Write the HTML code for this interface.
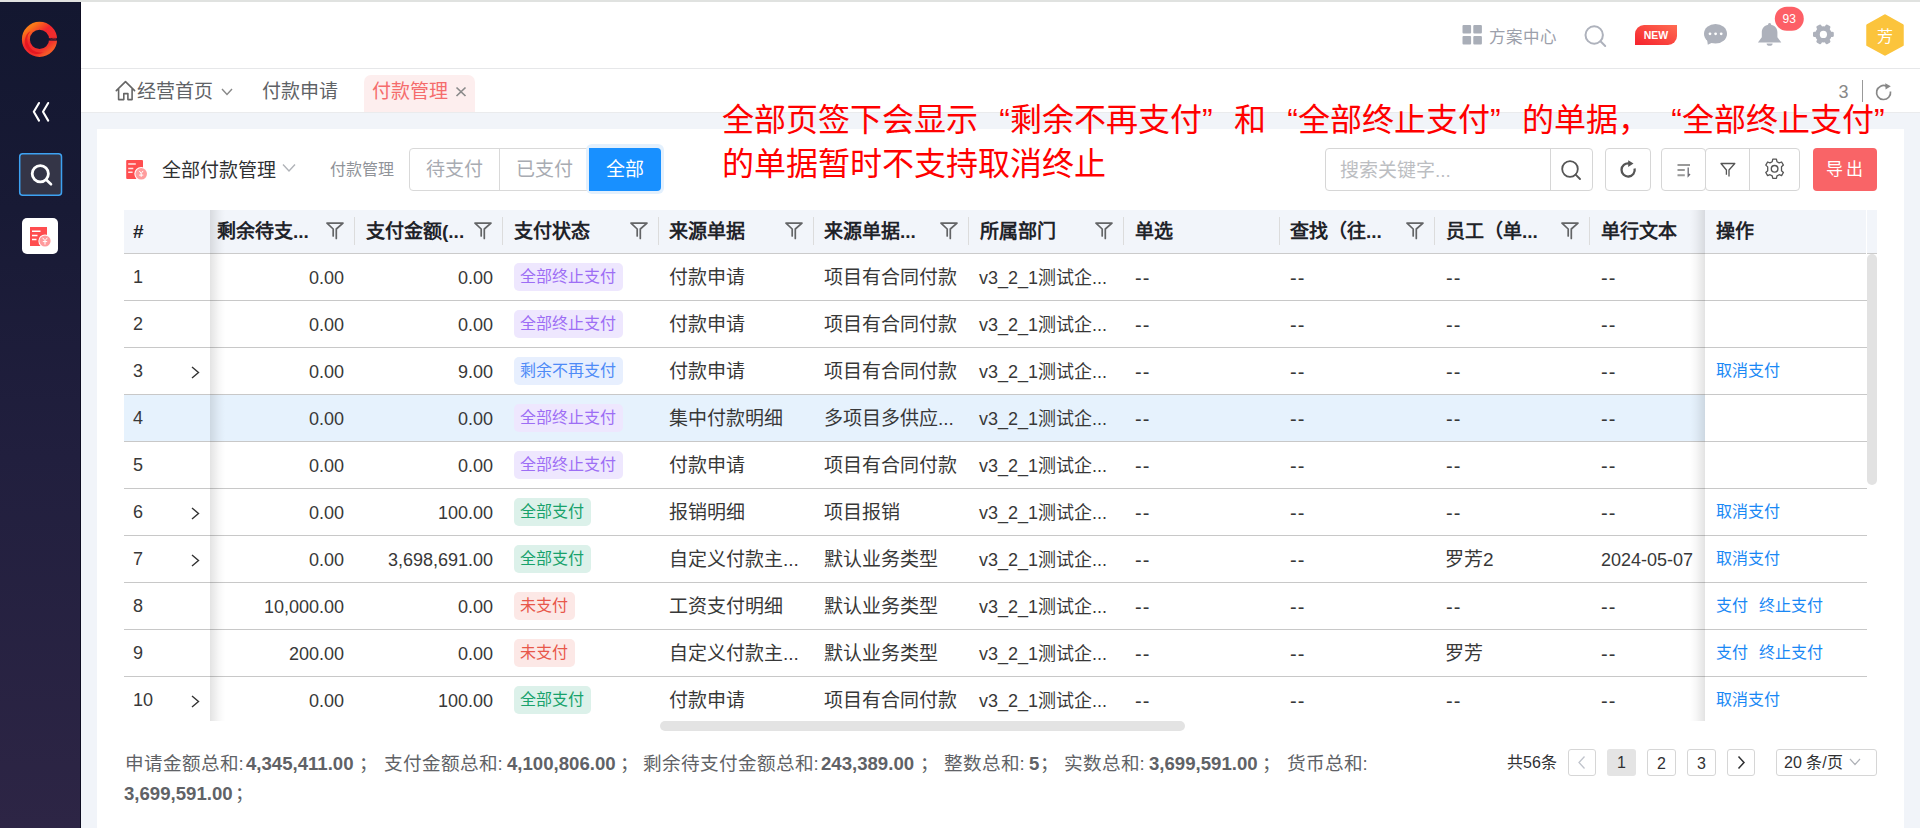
<!DOCTYPE html>
<html lang="zh-CN">
<head>
<meta charset="utf-8">
<style>
*{box-sizing:border-box;margin:0;padding:0}
html,body{width:1920px;height:828px;overflow:hidden}
body{position:relative;background:#f1f4f9;font-family:"Liberation Sans",sans-serif;color:#303133}
.a{position:absolute;white-space:nowrap}
#topstrip{left:0;top:0;width:1920px;height:2px;background:#e0e2e0}
#side{left:0;top:2px;width:81px;height:826px;background:linear-gradient(to bottom,#131730 0%,#181a35 25%,#211f3e 55%,#2d2545 100%);box-shadow:inset -1px 0 #0e0d22}
#header{left:81px;top:2px;width:1839px;height:67px;background:#fff;border-bottom:1px solid #e6e7e9}
#tabs{left:81px;top:69px;width:1839px;height:44px;background:#fff;border-bottom:1px solid #eaebed}
#card{left:97px;top:129px;width:1807px;height:699px;background:#fff}
.th{font-weight:bold;font-size:19px;color:#1f2329;line-height:43px;top:210px}
.sep{top:217px;width:1px;height:28px;background:#dcdcdc}
.td{font-size:19px;color:#383838;line-height:46px;padding-top:1px}
.num{font-size:18px;text-align:right}
.tag{height:27.5px;line-height:27.5px;font-size:16px;padding:0 6.5px 0 6px;border-radius:5px}
.t-p{background:#eee7fe;color:#9d6ef5}
.t-b{background:#e7effe;color:#4f8bf7}
.t-g{background:#dcf1ea;color:#18a26c}
.t-r{background:#fce8e6;color:#e8574a}
.lnk{font-size:16px;color:#1a88f5;line-height:46px}
.rowb{left:124px;width:1743px;height:1px;background:#c8c8c8}
</style>
</head>
<body>
<div id="topstrip" class="a"></div>
<div id="side" class="a"></div>
<div id="header" class="a"></div>
<div id="tabs" class="a"></div>
<div id="card" class="a"></div>
<svg class="a" style="left:0;top:0" width="81" height="270" viewBox="0 0 81 270">
<defs><linearGradient id="lg" x1="0.15" y1="0.05" x2="0.85" y2="0.95"><stop offset="0" stop-color="#fa7a18"/><stop offset="0.38" stop-color="#f2262e"/><stop offset="0.8" stop-color="#f0302c"/><stop offset="1" stop-color="#f55a28"/></linearGradient>
<radialGradient id="lg2" cx="0.5" cy="0.5" r="0.5"><stop offset="0.6" stop-color="#d8101c" stop-opacity="0.9"/><stop offset="1" stop-color="#ff3a20" stop-opacity="0"/></radialGradient></defs>
<circle cx="39.5" cy="39.4" r="13.6" fill="none" stroke="url(#lg)" stroke-width="8"/>
<path d="M30.5 31 A13 13 0 0 0 44 52 A10.5 10.5 0 0 1 30.5 31 Z" fill="#e3141f" opacity="0.85"/>
<rect x="49" y="38.2" width="9" height="2.4" fill="#131730"/>
<text x="53" y="40.4" text-anchor="middle" font-family="Liberation Sans" font-size="2.6" fill="#d0202a">CRM</text>
<path d="M39 103 L33.8 111.8 L39 120.6 M48.2 103 L43 111.8 L48.2 120.6" fill="none" stroke="#fff" stroke-width="2.1" stroke-linecap="round" stroke-linejoin="round"/>
<rect x="19.7" y="153.7" width="41.8" height="41.6" rx="3" fill="#343547" stroke="#3da2f2" stroke-width="1.5"/>
<circle cx="40.3" cy="173.7" r="8.1" fill="none" stroke="#fff" stroke-width="2.8"/>
<path d="M46.3 179.7 L51 184.3" stroke="#fff" stroke-width="2.6" stroke-linecap="round"/>
<rect x="22" y="218" width="36" height="36" rx="5" fill="#fff"/>
<rect x="30" y="227" width="17" height="19" fill="#ff4d4f"/>
<path d="M32 231.2 H40.5 M32 235.5 H37.5 M32 239.5 H36.5" stroke="#fff" stroke-width="1.5"/>
<circle cx="45" cy="241" r="6.6" fill="#fff"/>
<circle cx="45" cy="241" r="5.6" fill="#ff9a9c"/>
<path d="M42.6 237.8 L45 240.6 L47.4 237.8 M45 240.6 V244.6 M42.8 241.6 H47.2" stroke="#fff" stroke-width="1" fill="none"/>
</svg>
<svg class="a" style="left:1455px;top:4px" width="465" height="60" viewBox="1455 4 465 60">
<rect x="1462.5" y="25" width="8.6" height="8.6" rx="1" fill="#a9aeb8"/>
<rect x="1473.3" y="25" width="8.6" height="8.6" rx="1" fill="#a9aeb8"/>
<rect x="1462.5" y="35.9" width="8.6" height="8.6" rx="1" fill="#a9aeb8"/>
<rect x="1473.3" y="35.9" width="8.6" height="8.6" rx="1" fill="#a9aeb8"/>
<circle cx="1594.2" cy="35" r="8.7" fill="none" stroke="#aeb2bc" stroke-width="2"/>
<path d="M1600.5 41.3 L1605.2 46" stroke="#aeb2bc" stroke-width="2" stroke-linecap="round"/>
<defs><linearGradient id="ng" x1="0" y1="1" x2="1" y2="0"><stop offset="0" stop-color="#f5222d"/><stop offset="1" stop-color="#ff6b52"/></linearGradient></defs>
<path d="M1644 25 H1677 V36 A9 9 0 0 1 1668 45 H1635 V34 A9 9 0 0 1 1644 25 Z" fill="url(#ng)"/>
<text x="1656" y="39.3" text-anchor="middle" font-family="Liberation Sans" font-weight="bold" font-size="10.5" fill="#fff">NEW</text>
<ellipse cx="1715.5" cy="33.8" rx="11.5" ry="9.8" fill="#adb1bb"/>
<path d="M1707 39 L1707.8 44.8 L1713.5 42" fill="#adb1bb"/>
<circle cx="1710" cy="33.8" r="1.4" fill="#fff"/><circle cx="1715.6" cy="33.8" r="1.4" fill="#fff"/><circle cx="1721.2" cy="33.8" r="1.4" fill="#fff"/>
<path d="M1769.6 23 C1768.5 23 1768.1 23.7 1768.1 24.8 C1764 25.6 1761.8 28.5 1761.8 32.5 V37.2 L1757.9 42.6 H1781.3 L1777.4 37.2 V32.5 C1777.4 28.5 1775.2 25.6 1771.1 24.8 C1771.1 23.7 1770.7 23 1769.6 23 Z" fill="#adb1bb"/>
<path d="M1766.6 43.4 H1772.6 A3 2.3 0 0 1 1766.6 43.4 Z" fill="#adb1bb"/>
<rect x="1774.8" y="6.7" width="29" height="24.1" rx="12" fill="#fd5f66"/>
<text x="1789.3" y="22.6" text-anchor="middle" font-family="Liberation Sans" font-size="12" fill="#fff">93</text>
<g transform="translate(1823.4 34.4)" fill="#adb1bb">
<circle r="8.2"/>
<rect x="-2.7" y="-10.4" width="5.4" height="20.8" rx="1.4" transform="rotate(90)"/>
<rect x="-2.7" y="-10.4" width="5.4" height="20.8" rx="1.4" transform="rotate(30)"/>
<rect x="-2.7" y="-10.4" width="5.4" height="20.8" rx="1.4" transform="rotate(150)"/>
<circle r="3.6" fill="#fff"/>
</g>
<path d="M1885 15.5 L1902.5 25.3 V45 L1885 54.5 L1867.5 45 V25.3 Z" fill="#fbc43c" stroke="#fbc43c" stroke-width="2.5" stroke-linejoin="round"/>
</svg>
<div class="a" style="left:1489px;top:25px;font-size:16.5px;line-height:24px;color:#9ca0ab">方案中心</div>
<div class="a" style="left:1877px;top:23px;font-size:16px;line-height:28px;color:#fff">芳</div>
<div class="a" style="left:364px;top:75px;width:111px;height:37px;background:#fdeeee;border-radius:7px 7px 0 0"></div>
<svg class="a" style="left:112px;top:78px" width="26" height="26" viewBox="0 0 26 26"><path d="M4.3 12.6 L13.5 3.6 L22.6 12.6 M6.6 10.6 V21.6 H11.8 V15.6 H15.9 V21.6 H20.1 V10.6" fill="none" stroke="#666" stroke-width="1.6" stroke-linejoin="round" stroke-linecap="round"/></svg>
<div class="a" style="left:137px;top:79px;font-size:19px;line-height:26px;color:#606266">经营首页</div>
<svg class="a" style="left:220px;top:87px" width="14" height="10" viewBox="0 0 14 10"><path d="M2 2 L7 7.5 L12 2" fill="none" stroke="#888" stroke-width="1.4"/></svg>
<div class="a" style="left:262px;top:79px;font-size:19px;line-height:26px;color:#606266">付款申请</div>
<div class="a" style="left:372px;top:79px;font-size:19px;line-height:26px;color:#f56c6c">付款管理</div>
<svg class="a" style="left:454px;top:85px" width="14" height="13" viewBox="0 0 14 13"><path d="M2.5 2.5 L11.5 11 M11.5 2.5 L2.5 11" stroke="#8a8a8a" stroke-width="1.7"/></svg>
<div class="a" style="left:1838.5px;top:80px;font-size:18px;line-height:24px;color:#888">3</div>
<div class="a" style="left:1862px;top:80px;width:1px;height:22px;background:#999"></div>
<svg class="a" style="left:1873px;top:82px" width="22" height="22" viewBox="0 0 22 22"><path d="M17.5 9.5 A7 7 0 1 1 13.6 4.2" fill="none" stroke="#888" stroke-width="1.7"/><path d="M12.2 1.2 L17.8 4.3 L12.6 7.6 Z" fill="#888"/></svg>
<svg class="a" style="left:120px;top:155px" width="32" height="30" viewBox="120 155 32 30">
<rect x="126.2" y="160" width="16.8" height="19" rx="1" fill="#ff4d4f"/>
<path d="M128.2 164 H135.8 M128.2 168.4 H133.3 M128.2 172.3 H132.6" stroke="#fff" stroke-opacity="0.85" stroke-width="1.5"/>
<circle cx="141.2" cy="173.8" r="6.9" fill="#fff"/>
<circle cx="141.2" cy="173.8" r="5.8" fill="#ff9c9d"/>
<path d="M139.3 170.9 L141.2 173.5 L143.1 170.9 M141.2 173.5 V176.9 M139.1 175.1 H143.3" stroke="#fff" stroke-width="1" fill="none"/>
</svg>
<div class="a" style="left:162px;top:156px;font-size:19px;line-height:30px;color:#303133">全部付款管理</div>
<svg class="a" style="left:281px;top:162px" width="16" height="12" viewBox="0 0 16 12"><path d="M2 2.5 L8 9 L14 2.5" fill="none" stroke="#b0b3b8" stroke-width="1.4"/></svg>
<div class="a" style="left:330px;top:158px;font-size:16px;line-height:24px;color:#909399">付款管理</div>
<div class="a" style="left:409px;top:148px;width:181px;height:43px;border:1px solid #d9d9d9;border-radius:4px 0 0 4px"></div>
<div class="a" style="left:499px;top:148px;width:1px;height:43px;background:#d9d9d9"></div>
<div class="a" style="left:426px;top:155px;font-size:19px;line-height:30px;color:#a8abb2">待支付</div>
<div class="a" style="left:516px;top:155px;font-size:19px;line-height:30px;color:#a8abb2">已支付</div>
<div class="a" style="left:586px;top:144px;width:78px;height:50px;border-radius:6px;background:#e3f0fd"></div>
<div class="a" style="left:589px;top:148px;width:72px;height:43px;border-radius:0 4px 4px 0;background:#1890ff"></div>
<div class="a" style="left:606px;top:155px;font-size:19px;line-height:30px;color:#fff">全部</div>
<div class="a" style="left:1325px;top:148px;width:268px;height:43px;border:1px solid #d6d6d6;border-radius:4px"></div>
<div class="a" style="left:1550px;top:148px;width:1px;height:43px;background:#d6d6d6"></div>
<div class="a" style="left:1340px;top:157px;font-size:19px;line-height:28px;color:#bcbec2">搜索关键字...</div>
<div class="a" style="left:1605px;top:148px;width:46px;height:43px;border:1px solid #d6d6d6;border-radius:4px"></div>
<div class="a" style="left:1661px;top:148px;width:45px;height:43px;border:1px solid #d6d6d6;border-radius:4px"></div>
<div class="a" style="left:1705px;top:148px;width:95px;height:43px;border:1px solid #d6d6d6;border-radius:4px"></div>
<div class="a" style="left:1749px;top:148px;width:1px;height:43px;background:#d6d6d6"></div>
<svg class="a" style="left:1555px;top:148px" width="250" height="42" viewBox="1555 148 250 42">
<circle cx="1570" cy="169" r="7.8" fill="none" stroke="#555" stroke-width="1.8"/>
<path d="M1575.6 174.6 L1580 179" stroke="#555" stroke-width="1.9" stroke-linecap="round"/>
<path d="M1634.6 168.6 A6.6 6.6 0 1 1 1629 163.4" fill="none" stroke="#555" stroke-width="2.3"/>
<path d="M1628.2 160.2 L1633.5 163.6 L1628.2 167 Z" fill="#555"/>
<path d="M1677.5 165 H1690 M1677.5 170 H1684.8 M1677.5 175.2 H1684.8" stroke="#999" stroke-width="1.9"/>
<path d="M1688.2 167.5 V176 L1690 174" stroke="#6a6a72" stroke-width="1.3" fill="none"/>
<path d="M1726.4 174.8 V170 L1721 163.5 H1734.8 L1729 170 V176.6" fill="none" stroke="#555" stroke-width="1.3" stroke-linejoin="round"/>
</svg>
<svg class="a" style="left:1761px;top:156px" width="26" height="26" viewBox="-13 -13 26 26">
<path d="M-1.8 -9.6 H1.8 L2.4 -7.1 L4.6 -5.9 L7 -6.8 L8.8 -3.7 L6.9 -2 V1.9 L8.8 3.7 L7 6.8 L4.6 5.9 L2.4 7.1 L1.8 9.6 H-1.8 L-2.4 7.1 L-4.6 5.9 L-7 6.8 L-8.8 3.7 L-6.9 2 V-1.9 L-8.8 -3.7 L-7 -6.8 L-4.6 -5.9 L-2.4 -7.1 Z" fill="none" stroke="#555" stroke-width="1.3" stroke-linejoin="round" transform="translate(0.6 -0.2)"/>
<circle cx="0.6" cy="-0.2" r="3.3" fill="none" stroke="#555" stroke-width="1.4"/>
</svg>
<div class="a" style="left:1813px;top:148px;width:64px;height:43px;border-radius:4px;background:#f96467"></div>
<div class="a" style="left:1826px;top:156px;font-size:17px;line-height:27px;color:#fff;letter-spacing:3px">导出</div>
<div class="a" style="left:124.5px;top:749px;font-size:18.6px;line-height:30px;color:#606266">申请金额总和:</div>
<div class="a" style="left:246px;top:749px;font-size:18.6px;line-height:30px;color:#606266;font-weight:bold">4,345,411.00</div>
<div class="a" style="left:359px;top:749px;font-size:18.6px;line-height:30px;color:#606266">；</div>
<div class="a" style="left:383.5px;top:749px;font-size:18.6px;line-height:30px;color:#606266">支付金额总和:</div>
<div class="a" style="left:507px;top:749px;font-size:18.6px;line-height:30px;color:#606266;font-weight:bold">4,100,806.00</div>
<div class="a" style="left:620px;top:749px;font-size:18.6px;line-height:30px;color:#606266">；</div>
<div class="a" style="left:642.5px;top:749px;font-size:18.6px;line-height:30px;color:#606266">剩余待支付金额总和:</div>
<div class="a" style="left:821px;top:749px;font-size:18.6px;line-height:30px;color:#606266;font-weight:bold">243,389.00</div>
<div class="a" style="left:920px;top:749px;font-size:18.6px;line-height:30px;color:#606266">；</div>
<div class="a" style="left:943.5px;top:749px;font-size:18.6px;line-height:30px;color:#606266">整数总和:</div>
<div class="a" style="left:1029px;top:749px;font-size:18.6px;line-height:30px;color:#606266;font-weight:bold">5</div>
<div class="a" style="left:1040px;top:749px;font-size:18.6px;line-height:30px;color:#606266">；</div>
<div class="a" style="left:1063.5px;top:749px;font-size:18.6px;line-height:30px;color:#606266">实数总和:</div>
<div class="a" style="left:1149px;top:749px;font-size:18.6px;line-height:30px;color:#606266;font-weight:bold">3,699,591.00</div>
<div class="a" style="left:1262px;top:749px;font-size:18.6px;line-height:30px;color:#606266">；</div>
<div class="a" style="left:1286.5px;top:749px;font-size:18.6px;line-height:30px;color:#606266">货币总和:</div>
<div class="a" style="left:124px;top:779px;font-size:18.6px;line-height:30px;color:#606266;font-weight:bold">3,699,591.00</div>
<div class="a" style="left:235px;top:779px;font-size:18.6px;line-height:30px;color:#606266">；</div>
<div class="a" style="left:1507px;top:751px;font-size:16px;line-height:24px;color:#303133">共56条</div>
<div class="a" style="left:1568px;top:749px;width:28px;height:27px;border:1px solid #d6d6d6;border-radius:3px"></div>
<svg class="a" style="left:1568px;top:749px" width="28" height="27" viewBox="0 0 28 27"><path d="M16.5 7.5 L11 13.5 L16.5 19.5" fill="none" stroke="#c0c4cc" stroke-width="1.3"/></svg>
<div class="a" style="left:1607px;top:749px;width:29px;height:27px;border-radius:3px;background:#e4e4e4;font-size:16px;line-height:28px;text-align:center;color:#303133">1</div>
<div class="a" style="left:1647px;top:749px;width:29px;height:27px;border:1px solid #d6d6d6;border-radius:3px;font-size:16px;line-height:27px;text-align:center;color:#303133">2</div>
<div class="a" style="left:1687px;top:749px;width:29px;height:27px;border:1px solid #d6d6d6;border-radius:3px;font-size:16px;line-height:27px;text-align:center;color:#303133">3</div>
<div class="a" style="left:1727px;top:749px;width:28px;height:27px;border:1px solid #d6d6d6;border-radius:3px"></div>
<svg class="a" style="left:1727px;top:749px" width="28" height="27" viewBox="0 0 28 27"><path d="M11.5 7.5 L17 13.5 L11.5 19.5" fill="none" stroke="#303133" stroke-width="1.5"/></svg>
<div class="a" style="left:1776px;top:749px;width:101px;height:27px;border:1px solid #d6d6d6;border-radius:3px"></div>
<div class="a" style="left:1784px;top:751px;font-size:16px;line-height:24px;color:#303133">20 条/页</div>
<svg class="a" style="left:1848px;top:756px" width="14" height="12" viewBox="0 0 14 12"><path d="M2 3 L7 8.5 L12 3" fill="none" stroke="#b0b3b8" stroke-width="1.2"/></svg>
<div class="a" style="left:124px;top:210px;width:1753px;height:43px;background:#f2f5fa"></div>
<div class="a" style="left:124px;top:253px;width:1753px;height:1px;background:#cbcbcb"></div>
<div class="a" style="left:0;top:0;width:1920px;height:721px;overflow:hidden">
<div class="a rowb" style="top:300px"></div>
<div class="a td num" style="right:1576px;top:254px">0.00</div>
<div class="a td num" style="right:1427px;top:254px">0.00</div>
<div class="a tag t-p" style="left:514px;top:263px">全部终止支付</div>
<div class="a td" style="left:669px;top:254px">付款申请</div>
<div class="a td" style="left:824px;top:254px">项目有合同付款</div>
<div class="a td" style="left:979px;top:254px;font-size:18px">v3_2_1测试企...</div>
<div class="a td" style="left:1135px;top:254px;font-size:20px;letter-spacing:1px">--</div>
<div class="a td" style="left:1290px;top:254px;font-size:20px;letter-spacing:1px">--</div>
<div class="a td" style="left:1446px;top:254px;font-size:20px;letter-spacing:1px">--</div>
<div class="a td" style="left:1601px;top:254px;font-size:20px;letter-spacing:1px">--</div>
<div class="a rowb" style="top:347px"></div>
<div class="a td num" style="right:1576px;top:301px">0.00</div>
<div class="a td num" style="right:1427px;top:301px">0.00</div>
<div class="a tag t-p" style="left:514px;top:310px">全部终止支付</div>
<div class="a td" style="left:669px;top:301px">付款申请</div>
<div class="a td" style="left:824px;top:301px">项目有合同付款</div>
<div class="a td" style="left:979px;top:301px;font-size:18px">v3_2_1测试企...</div>
<div class="a td" style="left:1135px;top:301px;font-size:20px;letter-spacing:1px">--</div>
<div class="a td" style="left:1290px;top:301px;font-size:20px;letter-spacing:1px">--</div>
<div class="a td" style="left:1446px;top:301px;font-size:20px;letter-spacing:1px">--</div>
<div class="a td" style="left:1601px;top:301px;font-size:20px;letter-spacing:1px">--</div>
<div class="a rowb" style="top:394px"></div>
<div class="a td num" style="right:1576px;top:348px">0.00</div>
<div class="a td num" style="right:1427px;top:348px">9.00</div>
<div class="a tag t-b" style="left:514px;top:357px">剩余不再支付</div>
<div class="a td" style="left:669px;top:348px">付款申请</div>
<div class="a td" style="left:824px;top:348px">项目有合同付款</div>
<div class="a td" style="left:979px;top:348px;font-size:18px">v3_2_1测试企...</div>
<div class="a td" style="left:1135px;top:348px;font-size:20px;letter-spacing:1px">--</div>
<div class="a td" style="left:1290px;top:348px;font-size:20px;letter-spacing:1px">--</div>
<div class="a td" style="left:1446px;top:348px;font-size:20px;letter-spacing:1px">--</div>
<div class="a td" style="left:1601px;top:348px;font-size:20px;letter-spacing:1px">--</div>
<div class="a" style="left:124px;top:395px;width:1581px;height:46px;background:#e6f2fd"></div>
<div class="a rowb" style="top:441px"></div>
<div class="a td num" style="right:1576px;top:395px">0.00</div>
<div class="a td num" style="right:1427px;top:395px">0.00</div>
<div class="a tag t-p" style="left:514px;top:404px">全部终止支付</div>
<div class="a td" style="left:669px;top:395px">集中付款明细</div>
<div class="a td" style="left:824px;top:395px">多项目多供应...</div>
<div class="a td" style="left:979px;top:395px;font-size:18px">v3_2_1测试企...</div>
<div class="a td" style="left:1135px;top:395px;font-size:20px;letter-spacing:1px">--</div>
<div class="a td" style="left:1290px;top:395px;font-size:20px;letter-spacing:1px">--</div>
<div class="a td" style="left:1446px;top:395px;font-size:20px;letter-spacing:1px">--</div>
<div class="a td" style="left:1601px;top:395px;font-size:20px;letter-spacing:1px">--</div>
<div class="a rowb" style="top:488px"></div>
<div class="a td num" style="right:1576px;top:442px">0.00</div>
<div class="a td num" style="right:1427px;top:442px">0.00</div>
<div class="a tag t-p" style="left:514px;top:451px">全部终止支付</div>
<div class="a td" style="left:669px;top:442px">付款申请</div>
<div class="a td" style="left:824px;top:442px">项目有合同付款</div>
<div class="a td" style="left:979px;top:442px;font-size:18px">v3_2_1测试企...</div>
<div class="a td" style="left:1135px;top:442px;font-size:20px;letter-spacing:1px">--</div>
<div class="a td" style="left:1290px;top:442px;font-size:20px;letter-spacing:1px">--</div>
<div class="a td" style="left:1446px;top:442px;font-size:20px;letter-spacing:1px">--</div>
<div class="a td" style="left:1601px;top:442px;font-size:20px;letter-spacing:1px">--</div>
<div class="a rowb" style="top:535px"></div>
<div class="a td num" style="right:1576px;top:489px">0.00</div>
<div class="a td num" style="right:1427px;top:489px">100.00</div>
<div class="a tag t-g" style="left:514px;top:498px">全部支付</div>
<div class="a td" style="left:669px;top:489px">报销明细</div>
<div class="a td" style="left:824px;top:489px">项目报销</div>
<div class="a td" style="left:979px;top:489px;font-size:18px">v3_2_1测试企...</div>
<div class="a td" style="left:1135px;top:489px;font-size:20px;letter-spacing:1px">--</div>
<div class="a td" style="left:1290px;top:489px;font-size:20px;letter-spacing:1px">--</div>
<div class="a td" style="left:1446px;top:489px;font-size:20px;letter-spacing:1px">--</div>
<div class="a td" style="left:1601px;top:489px;font-size:20px;letter-spacing:1px">--</div>
<div class="a rowb" style="top:582px"></div>
<div class="a td num" style="right:1576px;top:536px">0.00</div>
<div class="a td num" style="right:1427px;top:536px">3,698,691.00</div>
<div class="a tag t-g" style="left:514px;top:545px">全部支付</div>
<div class="a td" style="left:669px;top:536px">自定义付款主...</div>
<div class="a td" style="left:824px;top:536px">默认业务类型</div>
<div class="a td" style="left:979px;top:536px;font-size:18px">v3_2_1测试企...</div>
<div class="a td" style="left:1135px;top:536px;font-size:20px;letter-spacing:1px">--</div>
<div class="a td" style="left:1290px;top:536px;font-size:20px;letter-spacing:1px">--</div>
<div class="a td" style="left:1445px;top:536px">罗芳2</div>
<div class="a td" style="left:1601px;top:536px;font-size:18px">2024-05-07</div>
<div class="a rowb" style="top:629px"></div>
<div class="a td num" style="right:1576px;top:583px">10,000.00</div>
<div class="a td num" style="right:1427px;top:583px">0.00</div>
<div class="a tag t-r" style="left:514px;top:592px">未支付</div>
<div class="a td" style="left:669px;top:583px">工资支付明细</div>
<div class="a td" style="left:824px;top:583px">默认业务类型</div>
<div class="a td" style="left:979px;top:583px;font-size:18px">v3_2_1测试企...</div>
<div class="a td" style="left:1135px;top:583px;font-size:20px;letter-spacing:1px">--</div>
<div class="a td" style="left:1290px;top:583px;font-size:20px;letter-spacing:1px">--</div>
<div class="a td" style="left:1446px;top:583px;font-size:20px;letter-spacing:1px">--</div>
<div class="a td" style="left:1601px;top:583px;font-size:20px;letter-spacing:1px">--</div>
<div class="a rowb" style="top:676px"></div>
<div class="a td num" style="right:1576px;top:630px">200.00</div>
<div class="a td num" style="right:1427px;top:630px">0.00</div>
<div class="a tag t-r" style="left:514px;top:639px">未支付</div>
<div class="a td" style="left:669px;top:630px">自定义付款主...</div>
<div class="a td" style="left:824px;top:630px">默认业务类型</div>
<div class="a td" style="left:979px;top:630px;font-size:18px">v3_2_1测试企...</div>
<div class="a td" style="left:1135px;top:630px;font-size:20px;letter-spacing:1px">--</div>
<div class="a td" style="left:1290px;top:630px;font-size:20px;letter-spacing:1px">--</div>
<div class="a td" style="left:1445px;top:630px">罗芳</div>
<div class="a td" style="left:1601px;top:630px;font-size:20px;letter-spacing:1px">--</div>
<div class="a td num" style="right:1576px;top:677px">0.00</div>
<div class="a td num" style="right:1427px;top:677px">100.00</div>
<div class="a tag t-g" style="left:514px;top:686px">全部支付</div>
<div class="a td" style="left:669px;top:677px">付款申请</div>
<div class="a td" style="left:824px;top:677px">项目有合同付款</div>
<div class="a td" style="left:979px;top:677px;font-size:18px">v3_2_1测试企...</div>
<div class="a td" style="left:1135px;top:677px;font-size:20px;letter-spacing:1px">--</div>
<div class="a td" style="left:1290px;top:677px;font-size:20px;letter-spacing:1px">--</div>
<div class="a td" style="left:1446px;top:677px;font-size:20px;letter-spacing:1px">--</div>
<div class="a td" style="left:1601px;top:677px;font-size:20px;letter-spacing:1px">--</div>
<div class="a" style="left:124px;top:254px;width:86px;height:467px;background:#fff"></div>
<div class="a rowb" style="top:300px;width:86px"></div>
<div class="a td" style="left:133px;top:253px;font-size:18px">1</div>
<div class="a rowb" style="top:347px;width:86px"></div>
<div class="a td" style="left:133px;top:300px;font-size:18px">2</div>
<div class="a rowb" style="top:394px;width:86px"></div>
<div class="a td" style="left:133px;top:347px;font-size:18px">3</div>
<svg class="a" style="left:190px;top:365.5px" width="11" height="13" viewBox="0 0 11 13"><path d="M2 1 L8.5 6.5 L2 12" fill="none" stroke="#333" stroke-width="1.4"/></svg>
<div class="a" style="left:124px;top:395px;width:86px;height:46px;background:#e6f2fd"></div>
<div class="a rowb" style="top:441px;width:86px"></div>
<div class="a td" style="left:133px;top:394px;font-size:18px">4</div>
<div class="a rowb" style="top:488px;width:86px"></div>
<div class="a td" style="left:133px;top:441px;font-size:18px">5</div>
<div class="a rowb" style="top:535px;width:86px"></div>
<div class="a td" style="left:133px;top:488px;font-size:18px">6</div>
<svg class="a" style="left:190px;top:506.5px" width="11" height="13" viewBox="0 0 11 13"><path d="M2 1 L8.5 6.5 L2 12" fill="none" stroke="#333" stroke-width="1.4"/></svg>
<div class="a rowb" style="top:582px;width:86px"></div>
<div class="a td" style="left:133px;top:535px;font-size:18px">7</div>
<svg class="a" style="left:190px;top:553.5px" width="11" height="13" viewBox="0 0 11 13"><path d="M2 1 L8.5 6.5 L2 12" fill="none" stroke="#333" stroke-width="1.4"/></svg>
<div class="a rowb" style="top:629px;width:86px"></div>
<div class="a td" style="left:133px;top:582px;font-size:18px">8</div>
<div class="a rowb" style="top:676px;width:86px"></div>
<div class="a td" style="left:133px;top:629px;font-size:18px">9</div>
<div class="a td" style="left:133px;top:676px;font-size:18px">10</div>
<svg class="a" style="left:190px;top:694.5px" width="11" height="13" viewBox="0 0 11 13"><path d="M2 1 L8.5 6.5 L2 12" fill="none" stroke="#333" stroke-width="1.4"/></svg>
<div class="a" style="left:210px;top:210px;width:15px;height:511px;background:linear-gradient(to right,rgba(0,0,0,.11),rgba(0,0,0,.03) 60%,rgba(0,0,0,0))"></div>
<div class="a" style="left:1705px;top:254px;width:162px;height:467px;background:#fff"></div>
<div class="a rowb" style="left:1705px;top:300px;width:162px"></div>
<div class="a rowb" style="left:1705px;top:347px;width:162px"></div>
<div class="a rowb" style="left:1705px;top:394px;width:162px"></div>
<div class="a lnk" style="left:1716px;top:348px">取消支付</div>
<div class="a rowb" style="left:1705px;top:441px;width:162px"></div>
<div class="a rowb" style="left:1705px;top:488px;width:162px"></div>
<div class="a rowb" style="left:1705px;top:535px;width:162px"></div>
<div class="a lnk" style="left:1716px;top:489px">取消支付</div>
<div class="a rowb" style="left:1705px;top:582px;width:162px"></div>
<div class="a lnk" style="left:1716px;top:536px">取消支付</div>
<div class="a rowb" style="left:1705px;top:629px;width:162px"></div>
<div class="a lnk" style="left:1716px;top:583px">支付</div>
<div class="a lnk" style="left:1759px;top:583px">终止支付</div>
<div class="a rowb" style="left:1705px;top:676px;width:162px"></div>
<div class="a lnk" style="left:1716px;top:630px">支付</div>
<div class="a lnk" style="left:1759px;top:630px">终止支付</div>
<div class="a lnk" style="left:1716px;top:677px">取消支付</div>
<div class="a" style="left:1690px;top:210px;width:15px;height:511px;background:linear-gradient(to left,rgba(0,0,0,.11),rgba(0,0,0,.03) 60%,rgba(0,0,0,0))"></div>
</div>
<div class="a" style="left:124px;top:210px;width:86px;height:43px;background:#f2f5fa"></div>
<div class="a th" style="left:133px">#</div>
<div class="a th" style="left:217px">剩余待支...</div>
<div class="a sep" style="left:354px"></div>
<svg class="a" style="left:326px;top:222px" width="18" height="18" viewBox="0 0 18 18"><path d="M7.2 14 V7 L1 1.2 H17 L10.3 7 V16.5" fill="none" stroke="#636466" stroke-width="1.7" stroke-linejoin="round" stroke-linecap="round"/></svg>
<div class="a th" style="left:366px">支付金额(...</div>
<div class="a sep" style="left:502px"></div>
<svg class="a" style="left:474px;top:222px" width="18" height="18" viewBox="0 0 18 18"><path d="M7.2 14 V7 L1 1.2 H17 L10.3 7 V16.5" fill="none" stroke="#636466" stroke-width="1.7" stroke-linejoin="round" stroke-linecap="round"/></svg>
<div class="a th" style="left:514px">支付状态</div>
<div class="a sep" style="left:658px"></div>
<svg class="a" style="left:630px;top:222px" width="18" height="18" viewBox="0 0 18 18"><path d="M7.2 14 V7 L1 1.2 H17 L10.3 7 V16.5" fill="none" stroke="#636466" stroke-width="1.7" stroke-linejoin="round" stroke-linecap="round"/></svg>
<div class="a th" style="left:669px">来源单据</div>
<div class="a sep" style="left:813px"></div>
<svg class="a" style="left:785px;top:222px" width="18" height="18" viewBox="0 0 18 18"><path d="M7.2 14 V7 L1 1.2 H17 L10.3 7 V16.5" fill="none" stroke="#636466" stroke-width="1.7" stroke-linejoin="round" stroke-linecap="round"/></svg>
<div class="a th" style="left:824px">来源单据...</div>
<div class="a sep" style="left:968px"></div>
<svg class="a" style="left:940px;top:222px" width="18" height="18" viewBox="0 0 18 18"><path d="M7.2 14 V7 L1 1.2 H17 L10.3 7 V16.5" fill="none" stroke="#636466" stroke-width="1.7" stroke-linejoin="round" stroke-linecap="round"/></svg>
<div class="a th" style="left:980px">所属部门</div>
<div class="a sep" style="left:1123px"></div>
<svg class="a" style="left:1095px;top:222px" width="18" height="18" viewBox="0 0 18 18"><path d="M7.2 14 V7 L1 1.2 H17 L10.3 7 V16.5" fill="none" stroke="#636466" stroke-width="1.7" stroke-linejoin="round" stroke-linecap="round"/></svg>
<div class="a th" style="left:1135px">单选</div>
<div class="a sep" style="left:1279px"></div>
<div class="a th" style="left:1290px">查找（往...</div>
<div class="a sep" style="left:1434px"></div>
<svg class="a" style="left:1406px;top:222px" width="18" height="18" viewBox="0 0 18 18"><path d="M7.2 14 V7 L1 1.2 H17 L10.3 7 V16.5" fill="none" stroke="#636466" stroke-width="1.7" stroke-linejoin="round" stroke-linecap="round"/></svg>
<div class="a th" style="left:1446px">员工（单...</div>
<div class="a sep" style="left:1589px"></div>
<svg class="a" style="left:1561px;top:222px" width="18" height="18" viewBox="0 0 18 18"><path d="M7.2 14 V7 L1 1.2 H17 L10.3 7 V16.5" fill="none" stroke="#636466" stroke-width="1.7" stroke-linejoin="round" stroke-linecap="round"/></svg>
<div class="a th" style="left:1601px">单行文本</div>
<div class="a" style="left:1705px;top:210px;width:162px;height:43px;background:#f2f5fa"></div>
<div class="a th" style="left:1716px">操作</div>
<div class="a" style="left:1866px;top:210px;width:1px;height:44px;background:#fff"></div>
<div class="a" style="left:1867px;top:254px;width:10px;height:231px;border-radius:5px;background:#e2e2e2"></div>
<div class="a" style="left:660px;top:721px;width:525px;height:10px;border-radius:5px;background:#e3e3e3"></div>
<div class="a" style="left:722px;top:98px;font-size:32px;line-height:44px;color:#ff0000">全部页签下会显示<span style="display:inline-block;width:32px;text-align:right">“</span>剩余不再支付<span style="display:inline-block;width:32px;text-align:left">”</span>和<span style="display:inline-block;width:32px;text-align:right">“</span>全部终止支付<span style="display:inline-block;width:32px;text-align:left">”</span>的单据，<span style="display:inline-block;width:32px;text-align:right">“</span>全部终止支付<span style="display:inline-block;width:32px;text-align:left">”</span><br>的单据暂时不支持取消终止</div>
</body>
</html>
